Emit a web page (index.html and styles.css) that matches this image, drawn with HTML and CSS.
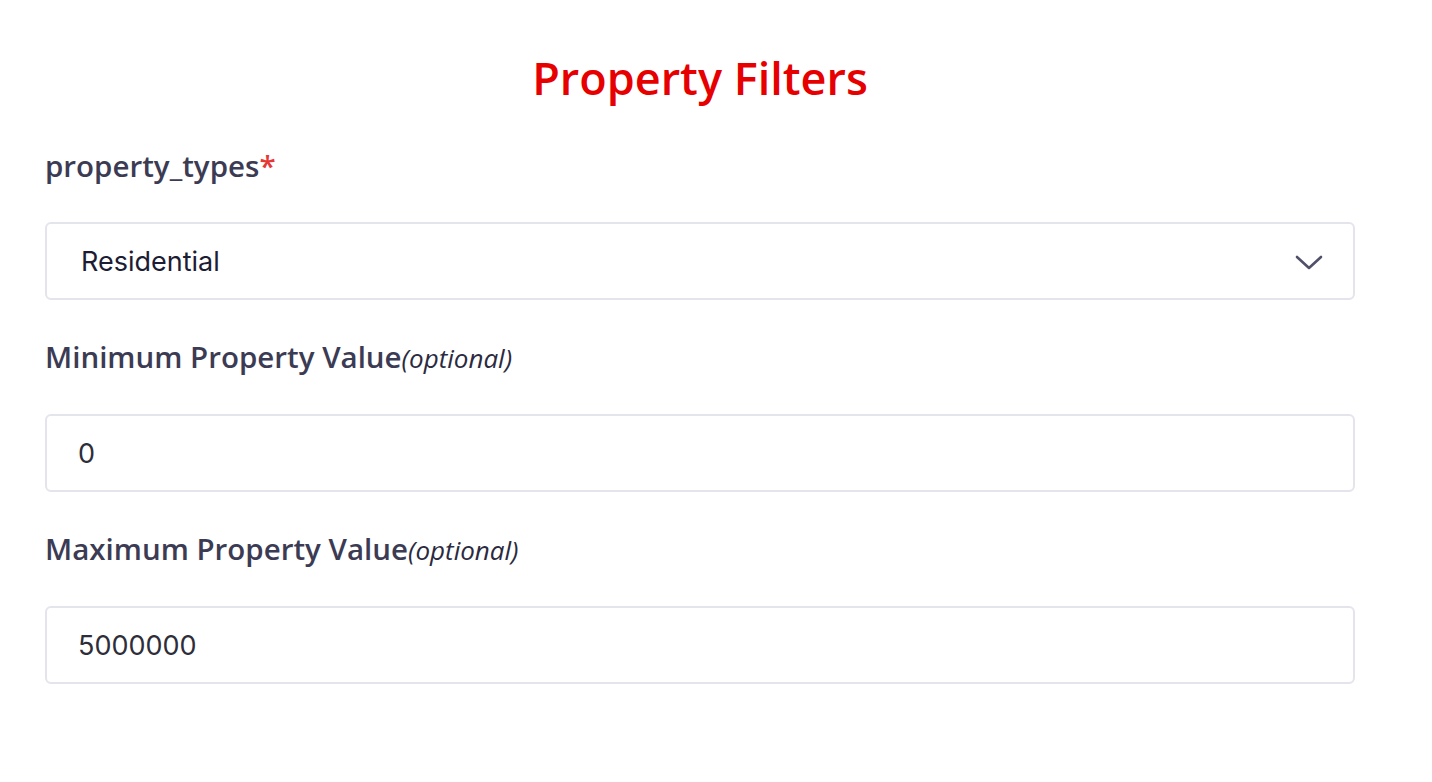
FILE: index.html
```html
<!DOCTYPE html>
<html>
<head>
    <title>Property Filters</title>
    <link rel="stylesheet" href="styles.css">
</head>
<body>

<form class="filters">
    <h1 class="filters-title">Property Filters</h1>

    <div class="field">
        <label class="field-label" for="propertyTypes">property_types<span class="required">*</span></label>
        <div class="select-wrap">
            <select id="propertyTypes" class="field-input field-select">
                <option>Residential</option>
                <option>Commercial</option>
                <option>Land</option>
            </select>
            <svg class="select-arrow" width="28" height="16" viewBox="0 0 28 16">
                <path d="M2 2 L14 13 L26 2" fill="none" stroke="#50506a" stroke-width="2.6" stroke-linecap="round" stroke-linejoin="round"/>
            </svg>
        </div>
    </div>

    <div class="field">
        <label class="field-label" for="minValue">Minimum Property Value<span class="optional">(optional)</span></label>
        <input id="minValue" type="text" class="field-input" value="0">
    </div>

    <div class="field">
        <label class="field-label" for="maxValue">Maximum Property Value<span class="optional">(optional)</span></label>
        <input id="maxValue" type="text" class="field-input" value="5000000">
    </div>
</form>

</body>
</html>
```
FILE: styles.css
```css
body {
    margin: 0;
    background-color: #fff;
    font-family: "Open Sans", Arial, sans-serif;
}
.filters {
    width: 1310px;
    margin-left: 45px;
    padding-top: 48px;
}
.filters-title {
    margin: 0 0 40px 0;
    text-align: center;
    color: #e60000;
    font-size: 45px;
    font-weight: 600;
    line-height: 60px;
}
.field {
    margin-bottom: 39px;
}
.field-label {
    display: block;
    margin-bottom: 38px;
    color: #3c3b54;
    font-size: 29.5px;
    font-weight: 600;
    line-height: 36px;
}
.required {
    color: #e53935;
}
.optional {
    font-size: 26px;
    font-weight: 400;
    font-style: italic;
    color: #2b2a40;
}
.field-input {
    display: block;
    box-sizing: border-box;
    width: 100%;
    height: 78px;
    padding: 0 31px;
    border: 2px solid #e4e4ec;
    border-radius: 6px;
    background-color: #fff;
    font-family: Inter, "Open Sans", sans-serif;
    font-size: 27px;
    color: #2e2e3a;
    outline: none;
}
.select-wrap {
    position: relative;
}
.field-select {
    appearance: none;
    -webkit-appearance: none;
    padding-left: 34px;
    color: #1c1c34;
}
.select-arrow {
    position: absolute;
    top: 33px;
    right: 32px;
    pointer-events: none;
}
```
